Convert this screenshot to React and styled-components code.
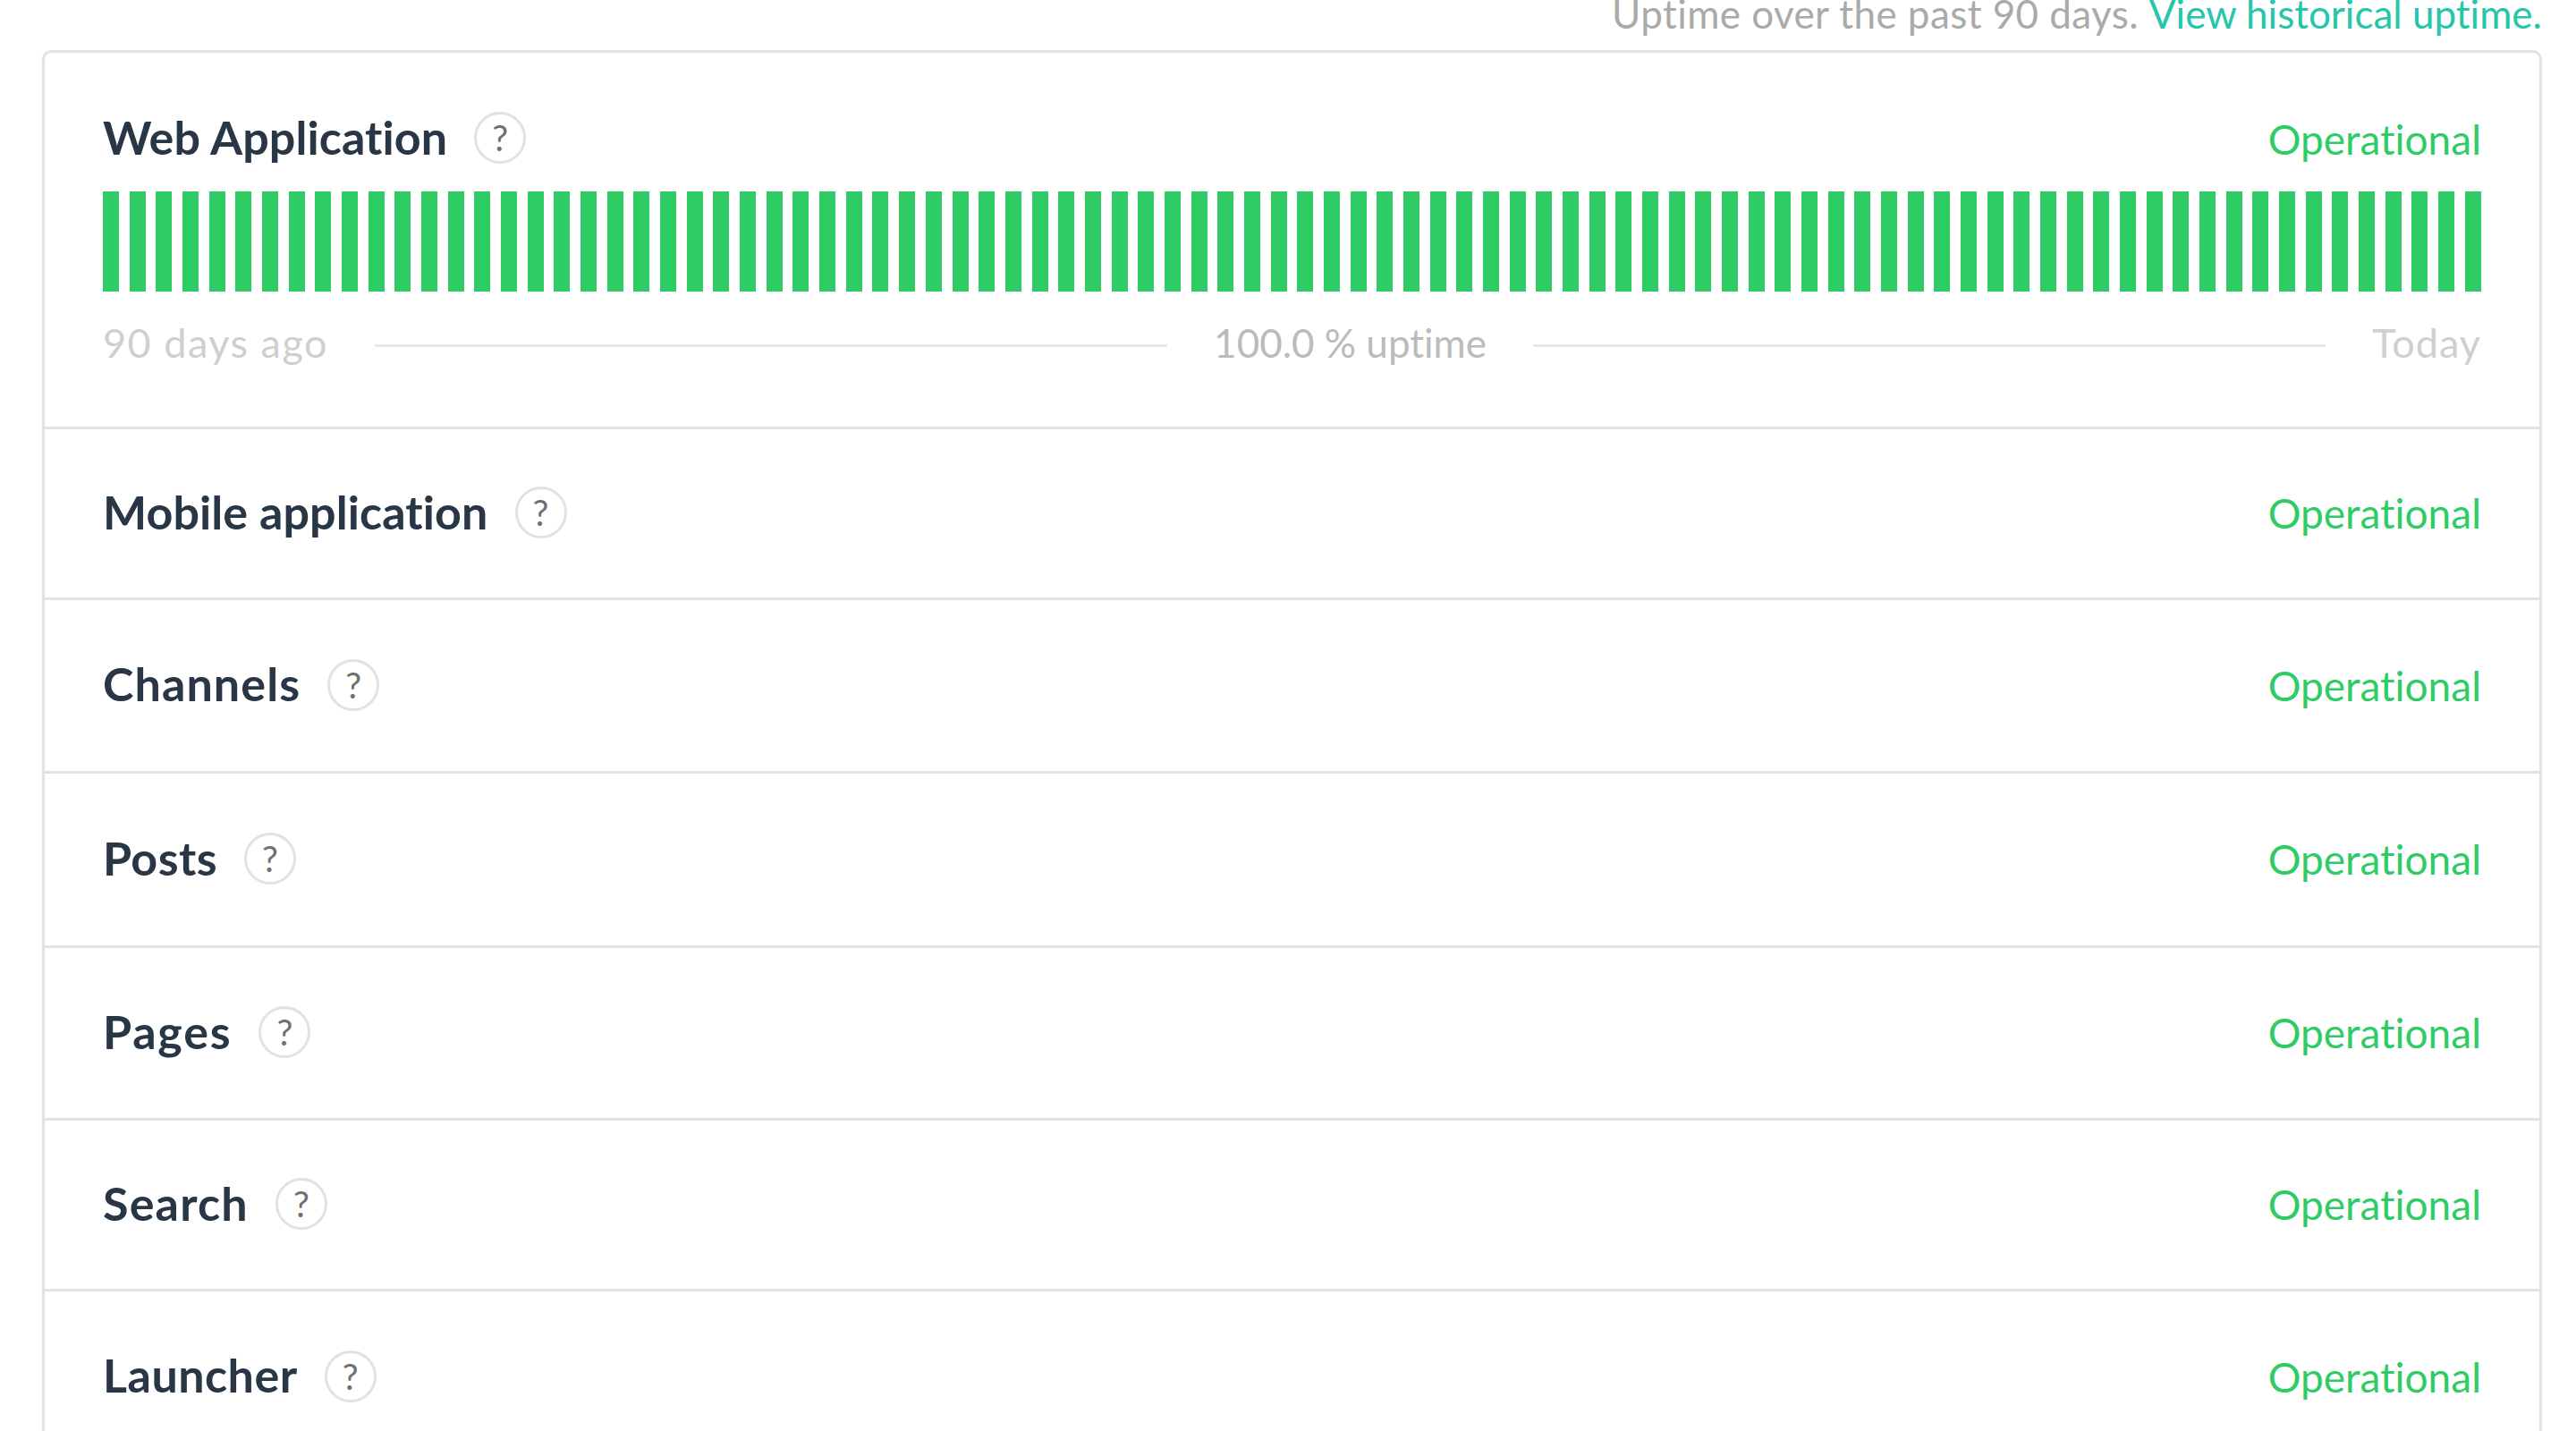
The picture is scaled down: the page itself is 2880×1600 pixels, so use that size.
import React from "react";
import styled, { createGlobalStyle } from "styled-components";

const Global = createGlobalStyle`
  html, body { margin: 0; padding: 0; background: #fff; overflow: hidden; }
  body {
    font-family: Lato, "Open Sans", "Liberation Sans", sans-serif;
    font-variant-ligatures: none;
  }
`;

const Page = styled.div`
  width: 2880px;
  height: 1600px;
  overflow: hidden;
  padding: 0 38px 0 47px;
  box-sizing: border-box;
`;

const Caption = styled.div`
  height: 56px;
  display: flex;
  justify-content: flex-end;
  font-size: 44px;
  line-height: 44px;
  color: #aaaaaa;
  white-space: pre;
`;

const CaptionText = styled.span`
  margin-top: -7px;
  letter-spacing: 0.43px;
`;

const CaptionLink = styled.span`
  color: #26c6ab;
  letter-spacing: 0;
`;

const Card = styled.div`
  border: 3px solid #e2e2e2;
  border-radius: 10px;
  box-sizing: border-box;
`;

const Row = styled.div`
  height: ${(p) => p.$height}px;
  box-sizing: border-box;
  padding: 0 65px;
  border-top: ${(p) => (p.$first ? "none" : "3px solid #e2e2e2")};
  display: flex;
  flex-direction: column;
  justify-content: ${(p) => (p.$first ? "flex-start" : "center")};
`;

const Head = styled.div`
  display: flex;
  align-items: center;
  justify-content: space-between;
  height: 58px;
  flex: none;
  margin-top: ${(p) => (p.$first ? "66px" : "0")};
`;

const TitleGroup = styled.div`
  display: flex;
  align-items: center;
  gap: 30px;
  margin-bottom: ${(p) => (p.$first ? "0" : "2px")};
`;

const Title = styled.span`
  font-size: 52px;
  font-weight: 700;
  color: #283646;
  line-height: 58px;
  padding-bottom: 3px;
  letter-spacing: ${(p) => p.$tracking}px;
`;

const Help = styled.span`
  width: 58px;
  height: 58px;
  box-sizing: border-box;
  border: 3px solid #e2e2e2;
  border-radius: 50%;
  display: flex;
  align-items: center;
  justify-content: center;
  font-size: 40px;
  color: #707070;
`;

const Status = styled.span`
  font-size: 46px;
  color: #2fcc66;
  line-height: 58px;
  margin-top: ${(p) => (p.$first ? "3px" : "0")};
`;

const Bars = styled.div`
  display: flex;
  justify-content: space-between;
  height: 112px;
  margin-top: 31px;
  flex: none;
`;

const Bar = styled.div`
  width: 18px;
  background: #2fcc66;
`;

const Legend = styled.div`
  display: flex;
  align-items: center;
  gap: 52px;
  margin-top: 28px;
  height: 58px;
  font-size: 45px;
  letter-spacing: 1.5px;
  color: #cfcfcf;
`;

const Rule = styled.div`
  flex: 1;
  height: 3px;
  background: #e8e8e8;
  margin-top: 6px;
`;

const Uptime = styled.span`
  color: #bbbbbb;
  font-size: 44px;
  letter-spacing: 0;
`;

const Today = styled.span`
  letter-spacing: 1px;
`;

const rows = [
  ["Mobile application", 191, 0.1],
  ["Channels", 194, 1.1],
  ["Posts", 195, 0.4],
  ["Pages", 193, 1.8],
  ["Search", 191, 1.2],
  ["Launcher", 194, 0.5],
];

function Header({ name, first, tracking }) {
  return (
    <Head $first={first}>
      <TitleGroup $first={first}>
        <Title $tracking={tracking}>{name}</Title>
        <Help>?</Help>
      </TitleGroup>
      <Status $first={first}>Operational</Status>
    </Head>
  );
}

export default function App() {
  return (
    <Page>
      <Global />
      <Caption>
        <CaptionText>
          Uptime over the past 90 days. <CaptionLink>View historical uptime.</CaptionLink>
        </CaptionText>
      </Caption>
      <Card>
        <Row $first $height={418}>
          <Header name="Web Application" first tracking={0.1} />
          <Bars>
            {Array.from({ length: 90 }, (_, i) => (
              <Bar key={i} />
            ))}
          </Bars>
          <Legend>
            <span>90 days ago</span>
            <Rule />
            <Uptime>100.0 % uptime</Uptime>
            <Rule />
            <Today>Today</Today>
          </Legend>
        </Row>
        {rows.map(([name, h, tracking]) => (
          <Row key={name} $height={h}>
            <Header name={name} tracking={tracking} />
          </Row>
        ))}
      </Card>
    </Page>
  );
}
